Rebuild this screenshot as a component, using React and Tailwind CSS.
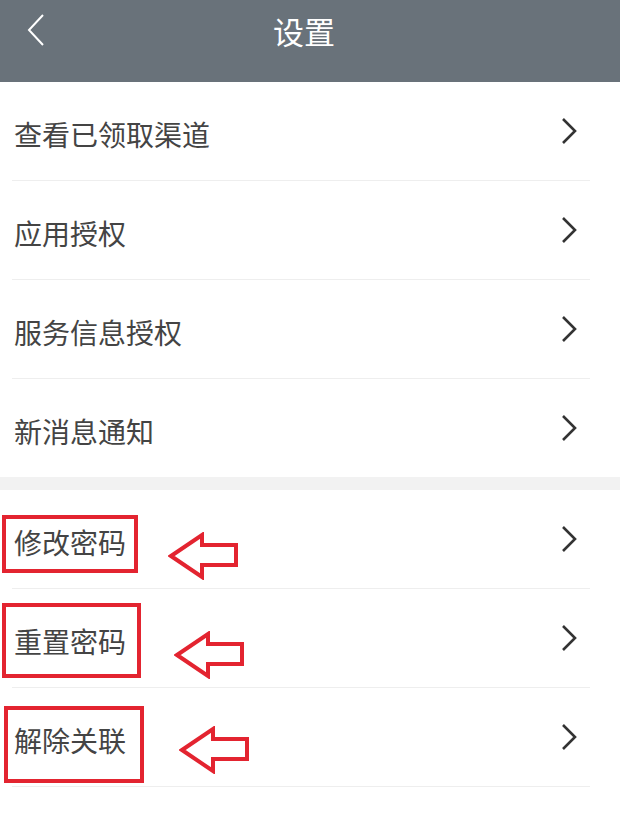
import React from 'react';

const font = { fontFamily: '"Noto Sans CJK SC", "Noto Sans", sans-serif' };

const Chevron = () => (
    <svg width="18" height="28" viewBox="0 0 18 28" className="shrink-0">
        <polyline points="3,2 15,14 3,26" fill="none" stroke="#333" strokeWidth="2.6" strokeLinejoin="miter" />
    </svg>
);

const RedArrow = ({ className }) => (
    <svg width="72" height="48" viewBox="0 0 72 48" className={className}>
        <polygon
            points="3,24 34,3 34,13 68,13 68,33 34,33 34,45"
            fill="white"
            stroke="#e32430"
            strokeWidth="4"
            strokeLinejoin="miter"
        />
    </svg>
);

const Row = ({ label, divider = true, mark }) => (
    <div className="relative">
        <div className="h-[98px] flex items-center justify-between pl-[14px] pr-[42px]">
            <span className="text-[28px] text-[#444] leading-none pt-[6px]">{label}</span>
            <Chevron />
        </div>
        {divider && <div className="h-px bg-[#eeeeee] ml-[12px] mr-[30px]" />}
        {mark && (
            <>
                <div className={`absolute border-[4px] border-[#e32430] ${mark.box}`} />
                <RedArrow className={`absolute ${mark.arrow}`} />
            </>
        )}
    </div>
);

export default function App() {
    return (
        <div className="w-[620px] h-[840px] bg-white" style={font}>
            {/* 顶部栏 */}
            <div className="relative h-[82px] bg-[#69727a] flex items-center justify-center">
                <svg width="20" height="34" viewBox="0 0 20 34" className="absolute left-[26px] top-[13px]">
                    <polyline points="17,2 3,17 17,32" fill="none" stroke="white" strokeWidth="2" />
                </svg>
                <span className="text-white text-[31px] leading-none -mt-[22px] -ml-[12px]">设置</span>
            </div>

            <Row label="查看已领取渠道" />
            <Row label="应用授权" />
            <Row label="服务信息授权" />
            <Row label="新消息通知" divider={false} />

            <div className="h-[13px] bg-[#f2f2f2]" />

            <Row
                label="修改密码"
                mark={{ box: 'left-[2px] top-[25px] w-[136px] h-[58px]', arrow: 'left-[168px] top-[42px]' }}
            />
            <Row
                label="重置密码"
                mark={{ box: 'left-[2px] top-[14px] w-[139px] h-[75px]', arrow: 'left-[174px] top-[42px]' }}
            />
            <Row
                label="解除关联"
                mark={{ box: 'left-[4px] top-[18px] w-[140px] h-[77px]', arrow: 'left-[179px] top-[38px]' }}
            />
        </div>
    );
}
